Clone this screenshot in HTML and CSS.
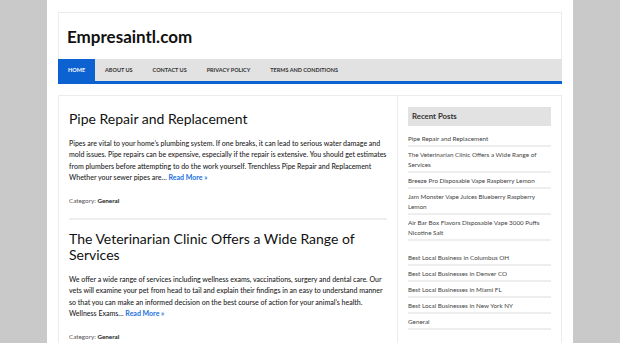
FILE: index.html
```html
<!DOCTYPE html>
<html lang="en">
<head>
<meta charset="utf-8">
<title>Empresaintl.com</title>
<link rel="stylesheet" href="styles.css">
</head>
<body>
<div class="page">
  <header class="site-header">
    <div class="site-title">Empresaintl.com</div>
  </header>
  <nav class="main-nav">
    <a class="nav-item active" href="#">Home</a>
    <a class="nav-item" href="#">About Us</a>
    <a class="nav-item" href="#">Contact Us</a>
    <a class="nav-item" href="#">Privacy Policy</a>
    <a class="nav-item" href="#">Terms and Conditions</a>
  </nav>
  <div class="wrap">
    <main class="content">
      <article class="post">
        <h2 class="post-title">Pipe Repair and Replacement</h2>
        <p class="post-excerpt">Pipes are vital to your home’s plumbing system. If one breaks, it can lead to serious water damage and mold issues. Pipe repairs can be expensive, especially if the repair is extensive. You should get estimates from plumbers before attempting to do the work yourself. Trenchless Pipe Repair and Replacement Whether your sewer pipes are… <a class="more" href="#">Read More »</a></p>
        <div class="post-meta">Category: <b>General</b></div>
      </article>
      <article class="post">
        <h2 class="post-title">The Veterinarian Clinic Offers a Wide Range of Services</h2>
        <p class="post-excerpt">We offer a wide range of services including wellness exams, vaccinations, surgery and dental care. Our vets will examine your pet from head to tail and explain their findings in an easy to understand manner so that you can make an informed decision on the best course of action for your animal’s health. Wellness Exams… <a class="more" href="#">Read More »</a></p>
        <div class="post-meta">Category: <b>General</b></div>
      </article>
    </main>
    <aside class="sidebar">
      <div class="widget">
        <h3 class="widget-title">Recent Posts</h3>
        <ul class="widget-list">
          <li>Pipe Repair and Replacement</li>
          <li>The Veterinarian Clinic Offers a Wide Range of Services</li>
          <li>Breeze Pro Disposable Vape Raspberry Lemon</li>
          <li>Jam Monster Vape Juices Blueberry Raspberry Lemon</li>
          <li>Air Bar Box Flavors Disposable Vape 3000 Puffs Nicotine Salt</li>
        </ul>
      </div>
      <div class="widget">
        <ul class="widget-list">
          <li>Best Local Business in Columbus OH</li>
          <li>Best Local Businesses in Denver CO</li>
          <li>Best Local Businesses in Miami FL</li>
          <li>Best Local Businesses in New York NY</li>
          <li>General</li>
        </ul>
      </div>
    </aside>
  </div>
</div>
</body>
</html>
```
FILE: styles.css
```css
* { box-sizing: border-box; }
html, body { margin: 0; padding: 0; }
body {
  background: #c9c9c9;
  font-family: Lato, "Liberation Sans", sans-serif;
  color: #333;
}
.page {
  width: 526px;
  margin: 0 auto;
  background: #fff;
  padding: 12px 11px 0;
  min-height: 343px;
}
.site-header {
  height: 47px;
  border: 1px solid #ececec;
  border-bottom: none;
  display: flex;
  align-items: center;
  padding: 1px 0 0 8px;
}
.site-title {
  font-size: 17px;
  font-weight: 700;
  color: #111;
}
.main-nav {
  display: flex;
  background: #e2e2e2;
  border-bottom: 3px solid #0b62d0;
  height: 25px;
}
.nav-item {
  display: block;
  padding: 0 10px;
  line-height: 22px;
  font-size: 5.5px;
  font-weight: 700;
  text-transform: uppercase;
  color: #333;
  text-decoration: none;
}
.nav-item.active {
  background: #0b62d0;
  color: #fff;
}
.wrap {
  margin-top: 11px;
  display: flex;
  border: 1px solid #ececec;
  border-bottom: none;
  min-height: 260px;
}
.content {
  width: 339px;
  border-right: 1px solid #ececec;
  padding: 2px 10px 0;
}
.post {
  padding: 13px 0 12px;
  border-bottom: 2px solid #eee;
}
.post + .post { padding-top: 11px; }
.post-title {
  margin: 0;
  font-size: 14px;
  line-height: 16px;
  font-weight: 400;
  color: #111;
}
.post-excerpt {
  margin: 11px 0 0;
  font-size: 7px;
  line-height: 11.3px;
  font-weight: 500;
  color: #222;
}
.more {
  color: #1a6fe0;
  text-decoration: none;
  font-weight: 700;
}
.post-meta {
  margin-top: 13px;
  font-size: 6.3px;
  line-height: 10px;
  color: #555;
}
.post-meta b { color: #222; }
.sidebar {
  flex: 1;
  padding: 11px 10px;
}
.widget + .widget { margin-top: 9px; }
.widget-title {
  margin: 0 0 5px;
  background: #e2e2e2;
  height: 19px;
  line-height: 19px;
  padding: 0 4px;
  font-size: 7.8px;
  font-weight: 700;
  color: #333;
}
.widget-list {
  list-style: none;
  margin: 0;
  padding: 0;
}
.widget-list li {
  font-size: 6.3px;
  line-height: 10px;
  padding: 3px 0 1px;
  border-bottom: 2px solid #eee;
  color: #444;
}
```
